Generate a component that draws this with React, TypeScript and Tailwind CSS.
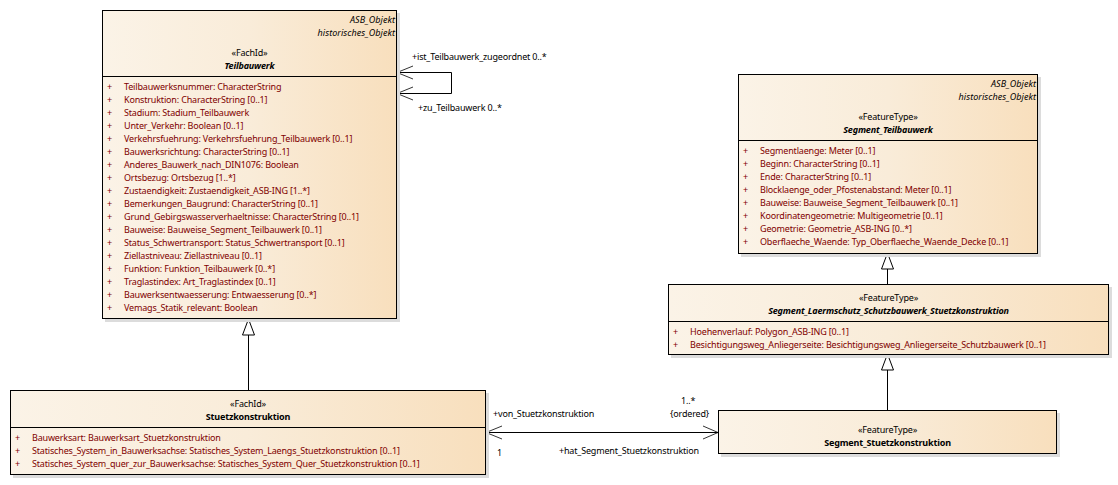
import React from 'react'

interface UmlNodeProps {
    pos: string
    tags?: string[]
    stereotype: string
    name: string
    italic?: boolean
    headerHeight: string
    rows?: string[]
}

function UmlNode({ pos, tags, stereotype, name, italic, headerHeight, rows }: UmlNodeProps) {
    return (
        <div className={`absolute flex flex-col border border-black bg-gradient-to-r from-[#fbf3e7] via-[#f9ecd9] to-[#f8dfbd] shadow-[3px_3px_0_#dcdcdc] ${pos}`}>
            <div className={`flex flex-col ${headerHeight} ${rows ? 'border-b border-black' : ''}`}>
                {tags && (
                    <div className="flex flex-col items-end pt-[2px] pr-[1px] italic tracking-[0.05px]">
                        {tags.map((t) => (
                            <div key={t} className="h-[13px] leading-[13px]">{t}</div>
                        ))}
                    </div>
                )}
                <div className="mt-auto flex flex-col items-center pb-[4px]">
                    <div className="h-[13px] leading-[13px]">«{stereotype}»</div>
                    <div className={`h-[13px] leading-[13px] font-bold ${italic ? 'italic' : ''}`}>{name}</div>
                </div>
            </div>
            {rows && (
                <div className="flex flex-col pt-[3px] text-[#800000]">
                    {rows.map((r) => (
                        <div key={r} className="flex h-[13px] items-center leading-[13px] whitespace-nowrap">
                            <span className="w-[21px] pl-[4px]">+</span>
                            <span>{r}</span>
                        </div>
                    ))}
                </div>
            )}
        </div>
    )
}

function Label({ pos, children }: { pos: string; children: React.ReactNode }) {
    return <div className={`absolute leading-[13px] whitespace-nowrap ${pos}`}>{children}</div>
}

const teilbauwerkRows = [
    'Teilbauwerksnummer: CharacterString',
    'Konstruktion: CharacterString [0..1]',
    'Stadium: Stadium_Teilbauwerk',
    'Unter_Verkehr: Boolean [0..1]',
    'Verkehrsfuehrung: Verkehrsfuehrung_Teilbauwerk [0..1]',
    'Bauwerksrichtung: CharacterString [0..1]',
    'Anderes_Bauwerk_nach_DIN1076: Boolean',
    'Ortsbezug: Ortsbezug [1..*]',
    'Zustaendigkeit: Zustaendigkeit_ASB-ING [1..*]',
    'Bemerkungen_Baugrund: CharacterString [0..1]',
    'Grund_Gebirgswasserverhaeltnisse: CharacterString [0..1]',
    'Bauweise: Bauweise_Segment_Teilbauwerk [0..1]',
    'Status_Schwertransport: Status_Schwertransport [0..1]',
    'Ziellastniveau: Ziellastniveau [0..1]',
    'Funktion: Funktion_Teilbauwerk [0..*]',
    'Traglastindex: Art_Traglastindex [0..1]',
    'Bauwerksentwaesserung: Entwaesserung [0..*]',
    'Vemags_Statik_relevant: Boolean',
]

const segmentTeilRows = [
    'Segmentlaenge: Meter [0..1]',
    'Beginn: CharacterString [0..1]',
    'Ende: CharacterString [0..1]',
    'Blocklaenge_oder_Pfostenabstand: Meter [0..1]',
    'Bauweise: Bauweise_Segment_Teilbauwerk [0..1]',
    'Koordinatengeometrie: Multigeometrie [0..1]',
    'Geometrie: Geometrie_ASB-ING [0..*]',
    'Oberflaeche_Waende: Typ_Oberflaeche_Waende_Decke [0..1]',
]

const laermRows = [
    'Hoehenverlauf: Polygon_ASB-ING [0..1]',
    'Besichtigungsweg_Anliegerseite: Besichtigungsweg_Anliegerseite_Schutzbauwerk [0..1]',
]

const stuetzRows = [
    'Bauwerksart: Bauwerksart_Stuetzkonstruktion',
    'Statisches_System_in_Bauwerksachse: Statisches_System_Laengs_Stuetzkonstruktion [0..1]',
    'Statisches_System_quer_zur_Bauwerksachse: Statisches_System_Quer_Stuetzkonstruktion [0..1]',
]

function Connectors() {
    return (
        <svg className="absolute left-0 top-0" width="1118" height="485" fill="none" stroke="#000">
            {/* self association */}
            <path d="M397 72.5H451.5V93.5H397" strokeWidth="1" />
            <path d="M413 66L397 72.5L413 79M413 87L397 93.5L413 100" strokeWidth="0.8" />
            {/* generalizations */}
            <path d="M248.5 390V335" />
            <path d="M248.5 319L242.5 335H254.5Z" fill="#fff" />
            <path d="M887.5 284V269" />
            <path d="M887.5 253L881.5 269H893.5Z" fill="#fff" />
            <path d="M887.5 410V370" />
            <path d="M887.5 354L881.5 370H893.5Z" fill="#fff" />
            {/* association */}
            <path d="M486 432.5H718" />
            <path d="M502 426L486 432.5L502 439M703 426L718 432.5L703 439" strokeWidth="0.8" />
        </svg>
    )
}

export default function App() {
    return (
        <div className="relative h-[485px] w-[1118px] overflow-hidden bg-white font-['Noto_Sans',sans-serif] text-[9px] tracking-[-0.17px] text-black">
            <Connectors />
            <UmlNode
                pos="left-[102px] top-[10px] w-[295px] h-[309px]"
                tags={['ASB_Objekt', 'historisches_Objekt']}
                stereotype="FachId"
                name="Teilbauwerk"
                italic
                headerHeight="h-[66px]"
                rows={teilbauwerkRows}
            />
            <UmlNode
                pos="left-[738px] top-[74px] w-[300px] h-[180px]"
                tags={['ASB_Objekt', 'historisches_Objekt']}
                stereotype="FeatureType"
                name="Segment_Teilbauwerk"
                italic
                headerHeight="h-[66px]"
                rows={segmentTeilRows}
            />
            <UmlNode
                pos="left-[668px] top-[284px] w-[441px] h-[71px]"
                stereotype="FeatureType"
                name="Segment_Laermschutz_Schutzbauwerk_Stuetzkonstruktion"
                italic
                headerHeight="h-[37px]"
                rows={laermRows}
            />
            <UmlNode
                pos="left-[10px] top-[390px] w-[476px] h-[85px]"
                stereotype="FachId"
                name="Stuetzkonstruktion"
                headerHeight="h-[37px]"
                rows={stuetzRows}
            />
            <UmlNode
                pos="left-[718px] top-[410px] w-[339px] h-[44px]"
                stereotype="FeatureType"
                name="Segment_Stuetzkonstruktion"
                headerHeight="h-[42px]"
            />
            <Label pos="left-[412px] top-[50px]">+ist_Teilbauwerk_zugeordnet 0..*</Label>
            <Label pos="left-[418px] top-[101px]">+zu_Teilbauwerk 0..*</Label>
            <Label pos="left-[493px] top-[407px]">+von_Stuetzkonstruktion</Label>
            <Label pos="left-[497px] top-[446px]">1</Label>
            <Label pos="left-[559px] top-[444px]">+hat_Segment_Stuetzkonstruktion</Label>
            <Label pos="left-[681px] top-[394px]">1..*</Label>
            <Label pos="left-[670px] top-[407px]">{'{ordered}'}</Label>
        </div>
    )
}
